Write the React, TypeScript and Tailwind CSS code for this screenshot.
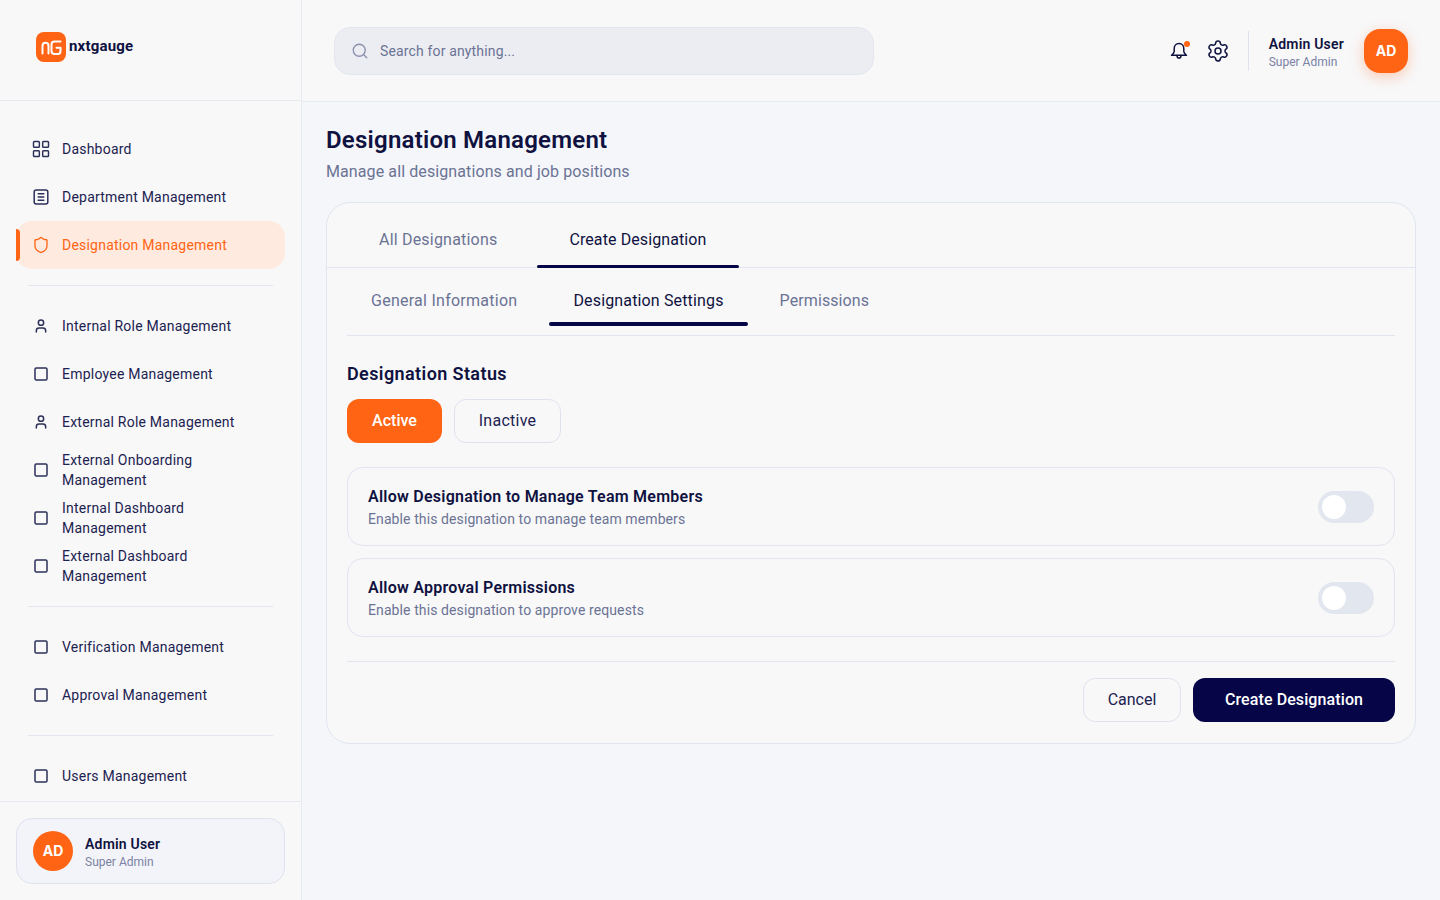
import { LayoutGrid, Search, Settings, Shield, Square, User } from 'lucide-react';
import type { ReactNode } from 'react';

const FileIcon = ({ className }: { className?: string }) => (
  <svg viewBox="0 0 18 18" fill="none" stroke="currentColor" strokeWidth="1.5" strokeLinecap="round" strokeLinejoin="round" className={className}>
    <rect x="2.2" y="2" width="13.6" height="14" rx="2" />
    <path d="M6.2 5.8h5.6M6.2 9h5.6M6.2 12.2h5.6" />
  </svg>
);

const BellIcon = ({ className }: { className?: string }) => (
  <svg viewBox="0 0 18 18" fill="none" stroke="currentColor" strokeWidth="1.5" strokeLinecap="round" strokeLinejoin="round" className={className}>
    <path d="M9 1.5C6 1.5 4.2 3.8 4.2 6.5v3c0 1.5-1.2 2.5-2.7 3.8h15c-1.5-1.3-2.7-2.3-2.7-3.8v-3c0-2.7-1.8-5-4.8-5Z" />
    <path d="M7 13.5c0 1.6.9 2.6 2 2.6s2-1 2-2.6" />
  </svg>
);

const IconUser = () => <User className="w-4 h-4" strokeWidth={2.25} />;
const IconSquare = () => <Square className="w-4 h-4" strokeWidth={2.25} />;

function NavItem({ icon, children, active }: { icon: ReactNode; children: ReactNode; active?: boolean }) {
  return (
    <div className={`relative h-12 px-4 flex items-center gap-3 rounded-2xl text-sm leading-5 font-[450] tracking-[0.22px] ${active ? 'bg-[#ffeadf] text-[#ff6414]' : 'text-[#1c2250]'}`}>
      {active && <span className="absolute left-0 top-2 bottom-2 w-1 bg-[#ff6414] rounded-r" />}
      <span className={`w-[18px] h-[18px] shrink-0 flex items-center justify-center ${active ? 'text-[#ff6414]' : 'text-[#2b3158]'}`}>{icon}</span>
      <span className="max-w-[190px]">{children}</span>
    </div>
  );
}

const Divider = () => <div className="h-px bg-[#e3e6f0] mx-3 my-4" />;

function ToggleCard({ title, text }: { title: string; text: string }) {
  return (
    <div className="h-[79px] border border-[#e1e5f0] rounded-2xl px-5 flex items-center justify-between">
      <div>
        <div className="text-base leading-6 font-semibold tracking-[0.24px] text-[#0f1240]">{title}</div>
        <div className="text-sm leading-5 tracking-[0.1px] text-[#6b7394]">{text}</div>
      </div>
      <div className="w-14 h-8 rounded-full bg-[#e2e6ef] p-1">
        <div className="w-6 h-6 rounded-full bg-white" />
      </div>
    </div>
  );
}

export default function App() {
  return (
    <div className="w-[1440px] h-[900px] flex overflow-hidden bg-[#f5f6fa] font-['Roboto',sans-serif]">
      <aside className="w-[302px] shrink-0 flex flex-col bg-[#f8f8f9] border-r border-[#e8eaf2]">
        <div className="h-[101px] shrink-0 border-b border-[#e8eaf2] pl-9 flex items-center gap-[3px] pb-[7px]">
          <svg viewBox="0 0 30 30" className="w-[30px] h-[30px]">
            <rect width="30" height="30" rx="8" fill="#ff6414" />
            <path d="M6.5 21.5v-7.5c0-2 1.3-3.2 3-3.2s3 1.2 3 3.2v7.5" fill="none" stroke="#fff" strokeWidth="2" strokeLinecap="round" />
            <path d="M24.5 9.5h-6c-2 0-3 1.3-3 3V19c0 1.8 1 3 3 3H22c1.6 0 2.5-1.2 2.5-3v-3.2h-4" fill="none" stroke="#fff" strokeWidth="2" strokeLinecap="round" strokeLinejoin="round" />
          </svg>
          <span className="text-[15px] font-bold tracking-[0.2px] text-[#0f1240]">nxtgauge</span>
        </div>
        <nav className="flex-1 px-4 pt-6">
          <NavItem icon={<LayoutGrid className="w-5 h-5 shrink-0" strokeWidth={1.75} />}>Dashboard</NavItem>
          <NavItem icon={<FileIcon className="w-[18px] h-[18px]" />}>Department Management</NavItem>
          <NavItem active icon={<Shield className="w-[18px] h-[18px]" strokeWidth={1.75} />}>Designation Management</NavItem>
          <Divider />
          <NavItem icon={<IconUser />}>Internal Role Management</NavItem>
          <NavItem icon={<IconSquare />}>Employee Management</NavItem>
          <NavItem icon={<IconUser />}>External Role Management</NavItem>
          <NavItem icon={<IconSquare />}>External Onboarding Management</NavItem>
          <NavItem icon={<IconSquare />}>Internal Dashboard Management</NavItem>
          <NavItem icon={<IconSquare />}>External Dashboard Management</NavItem>
          <Divider />
          <NavItem icon={<IconSquare />}>Verification Management</NavItem>
          <NavItem icon={<IconSquare />}>Approval Management</NavItem>
          <Divider />
          <NavItem icon={<IconSquare />}>Users Management</NavItem>
        </nav>
        <div className="h-[99px] shrink-0 border-t border-[#e8eaf2] p-4">
          <div className="h-[66px] rounded-2xl border border-[#dfe3ee] bg-[#f3f4f9] px-4 flex items-center gap-3">
            <div className="w-10 h-10 rounded-full bg-[#ff6414] text-white text-sm font-bold flex items-center justify-center font-['Inter',sans-serif]">AD</div>
            <div className="pt-[2px]">
              <div className="text-sm leading-5 font-semibold tracking-[0.2px] text-[#0f1240]">Admin User</div>
              <div className="text-xs leading-4 text-[#7a82a3]">Super Admin</div>
            </div>
          </div>
        </div>
      </aside>

      <div className="flex-1 min-w-0 flex flex-col">
        <header className="h-[102px] shrink-0 border-b border-[#e8eaf2] bg-[#f8f8f9] pl-8 pr-8 flex items-center justify-between">
          <div className="w-[540px] h-12 rounded-2xl bg-[#ecedf3] border border-[#e3e6ef] px-[16px] flex items-center gap-[11px]">
            <Search className="w-[18px] h-[18px] text-[#8a90ac]" strokeWidth={1.75} />
            <span className="text-sm tracking-[0.15px] text-[#6b7394]">Search for anything...</span>
          </div>
          <div className="flex items-center">
            <div className="relative mr-[18px]">
              <BellIcon className="w-[18px] h-[18px] text-[#0f1240]" />
              <span className="absolute -top-[1px] right-[-2px] w-1.5 h-1.5 rounded-full bg-[#ff6414]" />
            </div>
            <Settings className="w-6 h-6 text-[#0f1240] mr-[18px]" strokeWidth={1.5} />
            <div className="w-px h-10 bg-[#dfe3ee] mr-5" />
            <div className="mr-5 pt-[2px]">
              <div className="text-sm leading-5 font-semibold tracking-[0.2px] text-[#0f1240]">Admin User</div>
              <div className="text-xs leading-4 text-[#7a82a3]">Super Admin</div>
            </div>
            <div className="w-11 h-11 rounded-2xl bg-[#ff6414] text-white text-sm font-bold flex items-center justify-center font-['Inter',sans-serif] shadow-[0_4px_14px_rgba(255,100,20,0.3)]">AD</div>
          </div>
        </header>

        <main className="flex-1 px-6 pt-[22px]">
          <h1 className="text-2xl leading-8 font-semibold tracking-[0.23px] text-[#0f1240]">Designation Management</h1>
          <p className="text-base leading-6 mt-1 tracking-[0.1px] text-[#6b7394]">Manage all designations and job positions</p>
          <section className="mt-[18px] w-[1090px] h-[542px] rounded-3xl border border-[#e1e5f0] bg-[#f8f8f9]">
            <div className="h-[65px] border-b border-[#e1e5f0] px-5 flex gap-2">
              <div className="pt-[10px] px-8 flex items-center text-base tracking-[0.2px] text-[#6b7394]">All Designations</div>
              <div className="relative pt-[10px] px-8 flex items-center text-base font-[450] text-[#0f1240] tracking-[0.1px]">
                Create Designation
                <span className="absolute left-0 right-0 -bottom-px h-[3px] rounded-full bg-[#050548]" />
              </div>
            </div>
            <div className="px-5">
              <div className="h-[68px] border-b border-[#e1e5f0] flex gap-2">
                <div className="h-[58px] pt-2 px-6 flex items-center text-base tracking-[0.26px] text-[#6b7394]">General Information</div>
                <div className="relative h-[58px] pt-2 px-6 flex items-center text-base font-[450] tracking-[0.15px] text-[#0f1240]">
                  Designation Settings
                  <span className="absolute left-0 right-0 bottom-0 h-1 rounded-full bg-[#050548]" />
                </div>
                <div className="h-[58px] pt-2 px-6 flex items-center text-base tracking-[0.1px] text-[#6b7394]">Permissions</div>
              </div>
              <h2 className="mt-6 text-lg leading-7 font-semibold tracking-[0.4px] text-[#0f1240]">Designation Status</h2>
              <div className="mt-[11px] flex gap-3">
                <button className="w-[95px] h-11 rounded-xl bg-[#ff6414] text-white text-base font-medium">Active</button>
                <button className="w-[107px] h-11 rounded-xl border border-[#dfe3ee] text-base tracking-[0.25px] text-[#1c2250]">Inactive</button>
              </div>
              <div className="mt-6 flex flex-col gap-3">
                <ToggleCard title="Allow Designation to Manage Team Members" text="Enable this designation to manage team members" />
                <ToggleCard title="Allow Approval Permissions" text="Enable this designation to approve requests" />
              </div>
              <div className="mt-6 pt-4 border-t border-[#e1e5f0] flex justify-end gap-3">
                <button className="w-[98px] h-11 rounded-xl border border-[#dfe3ee] text-base text-[#1c2250]">Cancel</button>
                <button className="w-[202px] h-11 rounded-xl bg-[#050548] text-white text-base font-medium tracking-[0.1px]">Create Designation</button>
              </div>
            </div>
          </section>
        </main>
      </div>
    </div>
  );
}
